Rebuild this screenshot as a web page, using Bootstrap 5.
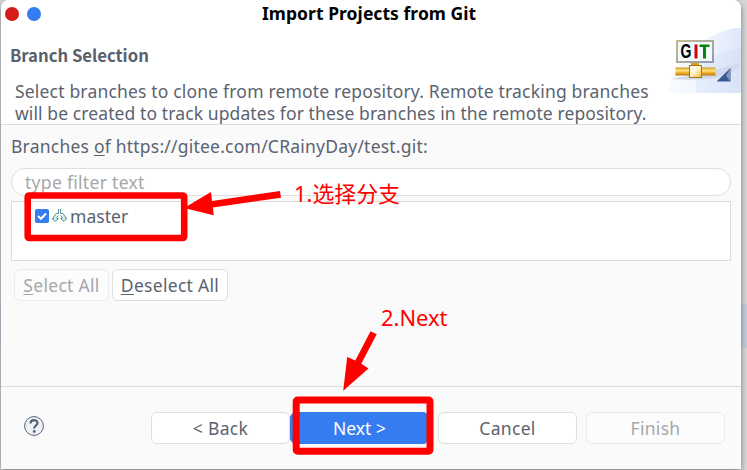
<!DOCTYPE html>
<html lang="en">
<head>
<meta charset="utf-8">
<meta name="viewport" content="width=device-width, initial-scale=1">
<title>Import Projects from Git</title>
<link href="https://cdn.jsdelivr.net/npm/bootstrap@5.3.0/dist/css/bootstrap.min.css" rel="stylesheet">
<style>
html,body{height:100%;overflow:hidden}
body{font-family:"Noto Sans","Open Sans",sans-serif;font-size:17.5px;line-height:22px;letter-spacing:.22px;color:#5b6370;background:linear-gradient(#d8d8d8 0 304px,#c3cedc 304px 348px,#d8d8d8 348px)}
.dialog{width:740px;height:469px;margin-left:1px;border-radius:8px 8px 0 0;background:#fafafa;box-shadow:0 2px 6px 0 rgba(0,0,0,.45)}
.banner{height:125px;border-bottom:1px solid #dcdcdc;border-radius:8px 8px 0 0}
.titlebar{height:27px;padding-left:4px;gap:8px}
.dot{width:14px;height:14px;border-radius:50%}
.dot-red{background:#d61b1b}.dot-blue{background:#367cf1}
.caption{margin-left:213px;padding-bottom:2px;font-weight:700;color:#000;letter-spacing:.05px}
.heading{padding:17px 0 0 9px;font:700 16.7px/22px "Noto Sans CJK SC",sans-serif;letter-spacing:0;color:#59616d}
.intro{padding:14px 0 0 14px;letter-spacing:.18px}
.intro-end{letter-spacing:.1px}
.git-art{width:75px;height:66px;margin-top:1px}
.body-part{height:262px;padding:10px 10px 0;border-bottom:1px solid #dcdcdc}
.filter{height:28px;margin-top:11px;padding:0 13px;border:1px solid #dfdfdf;border-radius:14px;color:#a5a7aa;letter-spacing:.3px}
.tree{height:60px;margin-top:5px;padding:3px 0 0 23px;border:1px solid #dcdcdc}
.check{width:14px;height:14px;border-radius:2px;background:#367cf1}
.branch-name{margin-left:3px;letter-spacing:.05px}
.push{height:32px;padding:0;border:1px solid #dfdfdf;border-radius:6px;background:#fff;color:#5b6370;font-size:inherit;line-height:30px;letter-spacing:.3px}
.push.off{opacity:1;background:#fcfcfc;border-color:#ebebeb;color:#a5a7ab}
.push.main{background:#367cf1;border-color:#367cf1;color:#fff;letter-spacing:0}
.selects{padding-left:3px;gap:3px}
.w-sel{width:95px}.w-desel{width:116px}
.foot{height:82px;padding:0 16px 0 23px}
.foot .push{width:139px}
.foot .cancel{margin:0 9px}
.help{margin-bottom:4px}
.note{color:#f00;font-size:21.900px;line-height:24px;letter-spacing:0;white-space:nowrap}
.n1{left:294px;top:182px;font-family:"Noto Sans","Noto Sans CJK SC",sans-serif}
.n2{left:381px;top:306px}
.u{text-decoration:underline;text-decoration-thickness:1px;text-underline-offset:2px;text-decoration-skip-ink:none}
.marks{left:0;top:0;pointer-events:none}
</style>
</head>
<body class="position-relative">
<main class="dialog">
  <header class="banner bg-white">
    <div class="titlebar d-flex align-items-center"><span class="dot dot-red"></span><span class="dot dot-blue"></span><span class="caption">Import Projects from Git</span></div>
    <div class="d-flex justify-content-between">
      <div class="text-nowrap">
        <div class="heading">Branch Selection</div>
        <div class="intro">Select branches to clone from remote repository. Remote tracking branches<br><span class="intro-end">will be created to track updates for these branches in the remote repository.</span></div>
      </div>
      <svg class="git-art" viewBox="0 0 75 66">
        <defs>
          <linearGradient id="sky" x1="0" x2="1"><stop stop-color="#f9fbfe"/><stop offset=".5" stop-color="#f1f5fd"/><stop offset="1" stop-color="#dfe8fa"/></linearGradient>
          <linearGradient id="gold" x1="0" x2="0" y1="0" y2="1"><stop stop-color="#d49a12"/><stop offset=".4" stop-color="#ffe389"/><stop offset=".65" stop-color="#eeb02a"/><stop offset="1" stop-color="#b97a05"/></linearGradient>
          <linearGradient id="cube" x1="0" x2="1" y1="0" y2="1"><stop stop-color="#fff"/><stop offset=".5" stop-color="#fff3c4"/><stop offset="1" stop-color="#f2b52e"/></linearGradient>
          <linearGradient id="frame" x1="0" x2="1" y1="0" y2="1"><stop stop-color="#c5b98c"/><stop offset="1" stop-color="#8f9db2"/></linearGradient>
          <linearGradient id="shade" x1="0" x2="1"><stop stop-color="#a9b4ca" stop-opacity=".5"/><stop offset="1" stop-color="#a9b4ca" stop-opacity=".2"/></linearGradient>
        </defs>
        <path d="M0 65Q16 8 75-1V65Z" fill="url(#sky)"/>
        <path d="M30 36Q50 24 75 20V65H30Z" fill="#c3d2f4" opacity=".25"/>
        <path d="M5 51Q40 45 75 35Q70 45 49 50Q28 53 5 51Z" fill="url(#shade)"/>
        <path d="M64.500 40V53.500H50.500Z" fill="#3b5a94"/>
        <path d="M64.500 40V53.500L60 48Z" fill="#8295bd"/>
        <rect x="11" y="13" width="36" height="21" fill="#f2fafc" stroke="url(#frame)" stroke-width="2"/>
        <text transform="translate(14.500 30.200) scale(.72 1)" font-family="Liberation Sans" font-size="19.500" font-weight="700" letter-spacing="0" fill="#000">G</text>
        <rect x="28.500" y="16.500" width="3" height="14" fill="#d1000a"/><path d="M33.500 16.500H43.500V19H40V30.500H37V19H33.500Z" fill="#07860c"/>
        <path d="M25 35H33V38H25Z" fill="#dba01d"/>
        <rect x="9.500" y="39.500" width="40" height="8" fill="url(#gold)"/>
        <rect x="23.500" y="37.500" width="12" height="12" fill="url(#cube)" stroke="#ad7308"/>
      </svg>
    </div>
  </header>
  <section class="body-part">
    <div>Branches <span class="u">o</span>f https://gitee.com/CRainyDay/test.git:</div>
    <div class="filter bg-white d-flex align-items-center">type filter text</div>
    <div class="tree bg-white"><div class="d-flex align-items-center">
      <span class="check d-flex"><svg width="14" height="14" viewBox="0 0 14 14"><path d="M3 7L6 9.800L11 4.500" fill="none" stroke="#fff" stroke-width="2"/></svg></span>
      <svg width="18" height="14" viewBox="-3 0 18 14" fill="none" stroke="#5b989a"><path d="M6.500 0V4.500H4L3 6M8.500 0V4.500H11L12 6"/><path d="M3 6L1.500 8V9.500H0L3 12.500L6.500 9.500H5V8L6.500 6.500M12 6L13.500 8V9.500H15L12 12.500L8.500 9.500H10V8L8.500 6.500" fill="#d5efed"/></svg>
      <span class="branch-name">master</span>
    </div></div>
    <div class="d-flex mt-2 selects"><button class="btn push off w-sel" disabled><span class="u">S</span>elect All</button><button class="btn push w-desel"><span class="u">D</span>eselect All</button></div>
  </section>
  <footer class="foot d-flex align-items-center">
    <svg class="help" width="20" height="20" viewBox="0 0 20 20"><circle cx="10" cy="10" r="9.400" fill="#f1f2f3" stroke="#53627f"/><path d="M6.500 7.500C6.500 3 13.500 3 13.500 7C13.500 9.500 10.200 9.300 10.200 12.500" fill="none" stroke="#53627f" stroke-width="2.200"/><circle cx="10.200" cy="15.500" r="1.400" fill="#53627f"/></svg>
    <div class="d-flex ms-auto"><button class="btn push">&lt; Back</button><button class="btn push main">Next &gt;</button><button class="btn push cancel">Cancel</button><button class="btn push off" disabled>Finish</button></div>
  </footer>
</main>
<svg class="marks position-absolute" width="747" height="470" viewBox="0 0 747 470" fill="#f00">
  <g fill="none" stroke="#f00"><rect x="27.700" y="195.500" width="156.500" height="42.500" rx="1.500" stroke-width="6.600"/><rect x="296.200" y="400" width="133.800" height="51.200" rx="1.500" stroke-width="7"/></g>
  <path d="M184 208L211 192L212 201L280 191L281 197.700L212.900 207.500L213.700 215.300Z"/>
  <path d="M343.200 390.700L347.200 357L355.300 360.500L370.500 331.200L376.700 334.300L361.300 363.700L368.500 368.500Z"/>
</svg>
<div class="note n1 position-absolute">1.选择分支</div>
<div class="note n2 position-absolute">2.Next</div>
<script src="https://cdn.jsdelivr.net/npm/bootstrap@5.3.0/dist/js/bootstrap.bundle.min.js"></script>
</body>
</html>
